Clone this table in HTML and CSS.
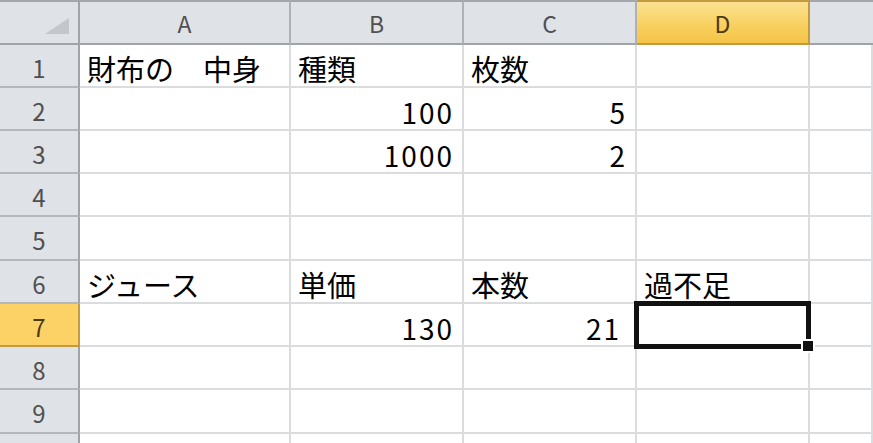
FILE: index.html
```html
<!DOCTYPE html>
<html lang="ja">
<head>
<meta charset="utf-8">
<title>Sheet</title>
<link rel="stylesheet" href="styles.css">
</head>
<body>
<div class="sheet">
  <div class="hd corner"><span class="tri"></span></div>
  <div class="hd col">A</div>
  <div class="hd col">B</div>
  <div class="hd col">C</div>
  <div class="hd col sel">D</div>
  <div class="hd col last"></div>

  <div class="hd row">1</div>
  <div class="c">財布の　中身</div>
  <div class="c">種類</div>
  <div class="c">枚数</div>
  <div class="c"></div>
  <div class="c"></div>

  <div class="hd row">2</div>
  <div class="c"></div>
  <div class="c num">100</div>
  <div class="c num">5</div>
  <div class="c"></div>
  <div class="c"></div>

  <div class="hd row">3</div>
  <div class="c"></div>
  <div class="c num">1000</div>
  <div class="c num">2</div>
  <div class="c"></div>
  <div class="c"></div>

  <div class="hd row">4</div>
  <div class="c"></div>
  <div class="c"></div>
  <div class="c"></div>
  <div class="c"></div>
  <div class="c"></div>

  <div class="hd row">5</div>
  <div class="c"></div>
  <div class="c"></div>
  <div class="c"></div>
  <div class="c"></div>
  <div class="c"></div>

  <div class="hd row">6</div>
  <div class="c">ジュース</div>
  <div class="c">単価</div>
  <div class="c">本数</div>
  <div class="c">過不足</div>
  <div class="c"></div>

  <div class="hd row sel">7</div>
  <div class="c"></div>
  <div class="c num">130</div>
  <div class="c num inset">21</div>
  <div class="c active"><span class="handle"></span></div>
  <div class="c"></div>

  <div class="hd row">8</div>
  <div class="c"></div>
  <div class="c"></div>
  <div class="c"></div>
  <div class="c"></div>
  <div class="c"></div>

  <div class="hd row">9</div>
  <div class="c"></div>
  <div class="c"></div>
  <div class="c"></div>
  <div class="c"></div>
  <div class="c"></div>

  <div class="hd row"></div>
  <div class="c"></div>
  <div class="c"></div>
  <div class="c"></div>
  <div class="c"></div>
  <div class="c"></div>
</div>
</body>
</html>
```

FILE: styles.css
```css
html, body {
  margin: 0;
  padding: 0;
  background: #ffffff;
  overflow: hidden;
}

.sheet {
  display: grid;
  grid-template-columns: 80px 211px 173px 173px 173px 63px;
  grid-template-rows: 45px 43px 43px 43px 43px 44px 43px 43px 43px 44px 43px;
  font-family: "Noto Sans CJK JP", "Noto Sans", sans-serif;
  color: #000;
}

.hd {
  box-sizing: border-box;
  background: #dfe2e6;
  color: #505050;
  display: flex;
  align-items: center;
  justify-content: center;
  font-size: 23px;
  line-height: 1;
}

.col {
  border-top: 2px solid #a3a7ac;
  border-right: 2px solid #aeb2b7;
  border-bottom: 2px solid #9fa4a9;
  padding-top: 2px;
}

.col.last {
  border-right: none;
}

.corner {
  position: relative;
  border-top: 2px solid #a3a7ac;
  border-right: 2px solid #9fa4a9;
  border-bottom: 2px solid #9fa4a9;
}

.tri {
  position: absolute;
  right: 9px;
  bottom: 9px;
  width: 0;
  height: 0;
  border-left: 24px solid transparent;
  border-bottom: 16px solid #c3c6ca;
}

.row {
  border-right: 2px solid #9fa4a9;
  border-bottom: 2px solid #b4b8bc;
  font-size: 24px;
  padding-top: 4px;
}

.hd.sel {
  background: linear-gradient(#fbe292, #f8cf5c 60%, #f5c449);
  color: #4a3a10;
  border-color: #c49a3e;
}

.row.sel {
  background: #fcd165;
  border-bottom-color: #c49a3e;
}

.c {
  box-sizing: border-box;
  border-right: 2px solid #dadcde;
  border-bottom: 2px solid #dadcde;
  font-size: 29px;
  line-height: 1;
  white-space: nowrap;
  display: flex;
  align-items: flex-end;
  padding: 0 0 3px 7px;
}

.num {
  justify-content: flex-end;
  font-size: 28px;
  padding: 0 8px 3px 0;
  letter-spacing: 2px;
}

.num.inset {
  padding-right: 14px;
}

.active {
  position: relative;
  z-index: 2;
}

.active::before {
  content: "";
  position: absolute;
  left: -3px;
  top: -3px;
  right: -3px;
  bottom: -4px;
  border: 5px solid #111;
}

.handle {
  position: absolute;
  right: -7px;
  bottom: -8px;
  width: 10px;
  height: 10px;
  background: #111;
  border: 2px solid #fff;
}
```
